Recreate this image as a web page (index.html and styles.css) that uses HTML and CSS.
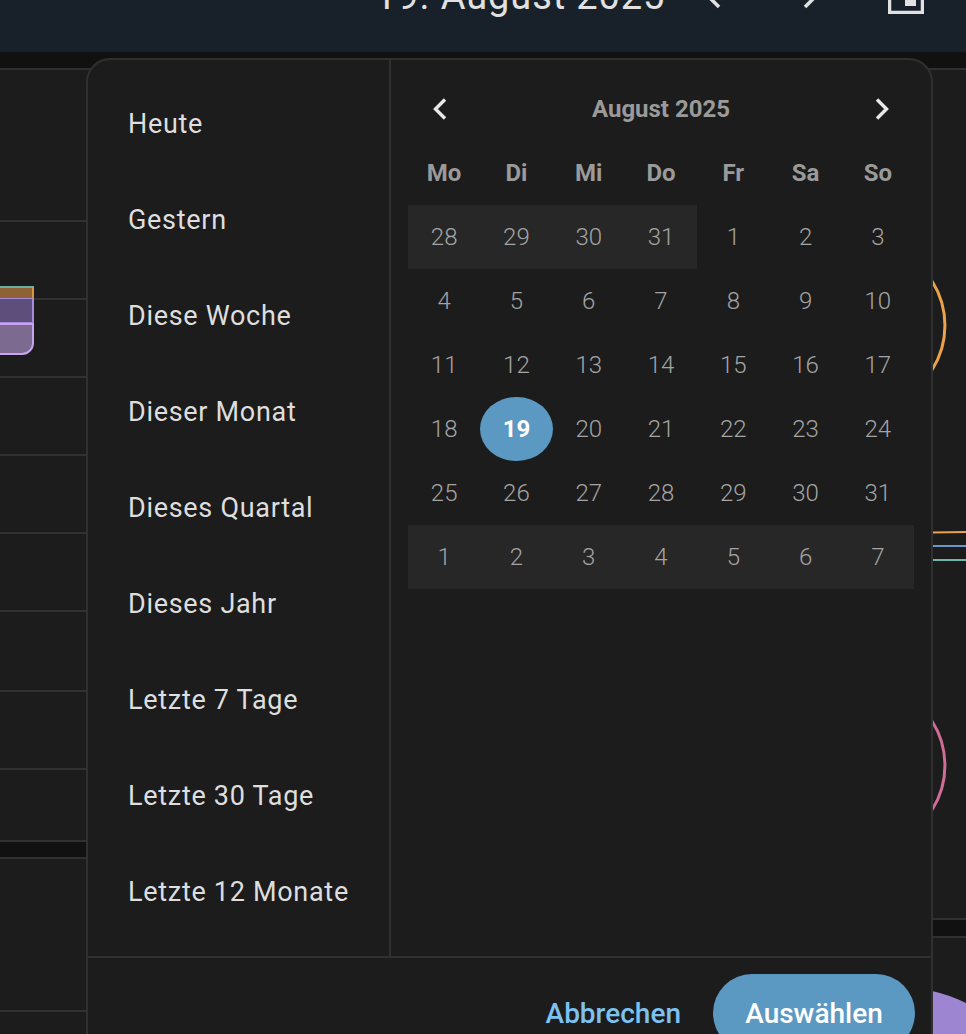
FILE: index.html
```html
<!DOCTYPE html>
<html lang="de">
<head>
  <meta charset="UTF-8" />
  <meta name="viewport" content="width=device-width, initial-scale=1.0" />
  <title>Verlauf</title>
  <link rel="stylesheet" href="styles.css">
</head>
<body>

  <header class="topbar">
    <span class="topbar-date">19. August 2025</span>
    <svg class="topbar-prev" width="14" height="10" viewBox="0 0 14 10"><path d="M12 7 3 -2" /></svg>
    <svg class="topbar-next" width="16" height="10" viewBox="0 0 16 10"><path d="M4 7l9-9" /></svg>
    <svg class="topbar-cal" width="36" height="14" viewBox="0 0 36 14"><path d="M1.5 0v12.5h33V0" /><rect class="fill" x="17" y="0" width="11" height="6" /></svg>
  </header>

  <main class="board">
    <div class="col col-left">
      <section class="card card-rows">
        <div class="row row-first"></div>
        <div class="row"></div>
        <div class="row"></div>
        <div class="row"></div>
        <div class="row"></div>
        <div class="row"></div>
        <div class="row row-tall"></div>
        <div class="row"></div>
        <div class="row row-last"></div>
        <div class="bar">
          <div class="bar-top"></div>
          <div class="bar-mid"></div>
          <div class="bar-low"></div>
        </div>
      </section>
      <section class="card card-second">
        <div class="row row-second"></div>
      </section>
    </div>

    <div class="col col-right">
      <section class="card card-chart">
        <svg class="chart" width="466" height="848" viewBox="0 0 466 848">
          <path class="arc-orange" d="M432 211A83 83 0 0 1 432 300" />
          <path class="line-orange" d="M432 462.500L466 462" />
          <path class="line-blue" d="M432 476h34" />
          <path class="line-teal" d="M432 490h34" />
          <path class="arc-pink" d="M432 651A83 83 0 0 1 432 740" />
        </svg>
      </section>
      <section class="card card-pie">
        <svg class="chart" width="466" height="96" viewBox="0 0 466 96">
          <path class="slice" d="M432 53q18 4 34 12v31h-34z" />
        </svg>
      </section>
    </div>
  </main>

  <div class="dialog">
    <div class="dialog-body">
      <ul class="presets">
        <li>Heute</li>
        <li>Gestern</li>
        <li>Diese Woche</li>
        <li>Dieser Monat</li>
        <li>Dieses Quartal</li>
        <li>Dieses Jahr</li>
        <li>Letzte 7 Tage</li>
        <li>Letzte 30 Tage</li>
        <li>Letzte 12 Monate</li>
      </ul>

      <div class="calendar">
        <div class="cal-head">
          <svg class="cal-arrow" width="16" height="24" viewBox="0 0 16 24"><path d="M13 2.500 3.500 12l9.500 9.500" /></svg>
          <span class="cal-title">August 2025</span>
          <svg class="cal-arrow" width="16" height="24" viewBox="0 0 16 24"><path d="M3 2.500l9.500 9.500L3 21.500" /></svg>
        </div>
        <div class="cal-grid">
          <div class="wd">Mo</div><div class="wd">Di</div><div class="wd">Mi</div><div class="wd">Do</div><div class="wd">Fr</div><div class="wd">Sa</div><div class="wd">So</div>

          <div class="day out">28</div><div class="day out">29</div><div class="day out">30</div><div class="day out">31</div><div class="day">1</div><div class="day">2</div><div class="day">3</div>
          <div class="day">4</div><div class="day">5</div><div class="day">6</div><div class="day">7</div><div class="day">8</div><div class="day">9</div><div class="day">10</div>
          <div class="day">11</div><div class="day">12</div><div class="day">13</div><div class="day">14</div><div class="day">15</div><div class="day">16</div><div class="day">17</div>
          <div class="day">18</div><div class="day selected">19</div><div class="day">20</div><div class="day">21</div><div class="day">22</div><div class="day">23</div><div class="day">24</div>
          <div class="day">25</div><div class="day">26</div><div class="day">27</div><div class="day">28</div><div class="day">29</div><div class="day">30</div><div class="day">31</div>
          <div class="day out">1</div><div class="day out">2</div><div class="day out">3</div><div class="day out">4</div><div class="day out">5</div><div class="day out">6</div><div class="day out">7</div>
        </div>
      </div>
    </div>

    <div class="dialog-foot">
      <button class="btn-text">Abbrechen</button>
      <button class="btn-fill">Auswählen</button>
    </div>
  </div>

</body>
</html>
```

FILE: styles.css
```css
:root {
  --line: #303030;
  --surface: #1c1c1c;
  --blue: #5b98c2;
  --font: Roboto, 'Noto Sans', sans-serif;
}

html,
body {
  height: 1034px;
  overflow: hidden;
}

body {
  margin: 0;
  position: relative;
  font-family: var(--font);
  background: #111111;
}

/* top bar, its content runs off the top of the picture */
.topbar {
  height: 52px;
  box-sizing: border-box;
  background: #18212a;
  color: #e1e1e1;
  display: flex;
  align-items: flex-start;
  padding-left: 375px;
  overflow: hidden;
}

.topbar-date {
  font-size: 38px;
  line-height: 38px;
  letter-spacing: 0.9px;
  white-space: nowrap;
  margin-top: -23px;
}

.topbar svg {
  fill: none;
  stroke: #e1e1e1;
  stroke-width: 3.500;
  flex: none;
}

.topbar-prev {
  margin-left: 42px;
}

.topbar-next {
  margin-left: 80px;
}

.topbar-cal {
  margin-left: 71px;
}

.topbar-cal .fill {
  fill: #e1e1e1;
  stroke: none;
}

/* page behind the dialog */
.board {
  display: grid;
  grid-template-columns: 500px 466px;
  margin-top: 16px;
}

.col {
  display: flex;
  flex-direction: column;
}

.card {
  background: var(--surface);
  border-top: 2px solid var(--line);
  border-bottom: 2px solid var(--line);
  position: relative;
}

.card-second {
  margin-top: 15px;
  height: 200px;
  border-bottom: none;
}

.row {
  height: 76px;
  border-bottom: 2px solid var(--line);
}

.row-first {
  height: 150px;
}

.row-tall {
  height: 78px;
}

.row-last {
  height: 70px;
  border-bottom: none;
}

.row-second {
  height: 151px;
}

.bar {
  position: absolute;
  left: -14px;
  top: 216px;
  width: 48px;
}

.bar-top {
  height: 10px;
  background: #8e6234;
  border: solid #d9953f;
  border-width: 0 2px;
  border-top: 2px solid #66b2a4;
}

.bar-mid {
  height: 23px;
  background: #5d4e7c;
  border: solid #a98bdc;
  border-width: 1px 2px;
}

.bar-low {
  height: 28px;
  background: #7c6a90;
  border: 2px solid #c6a4f0;
  border-radius: 0 0 12px 12px;
}

.card-chart {
  height: 848px;
}

.card-pie {
  margin-top: 16px;
  height: 96px;
  border-bottom: none;
}

.chart {
  display: block;
  fill: none;
  stroke-width: 2;
}

.arc-orange {
  stroke: #eba24a;
  stroke-width: 3;
}

.arc-pink {
  stroke: #d06c96;
  stroke-width: 3;
}

.line-orange {
  stroke: #eba24a;
}

.line-blue {
  stroke: #6a96cc;
}

.line-teal {
  stroke: #6fb5a8;
}

.slice {
  fill: #9d85d1;
  stroke: none;
}

/* date range dialog */
.dialog {
  position: absolute;
  left: 86px;
  top: 58px;
  width: 847px;
  height: 976px;
  box-sizing: border-box;
  background: var(--surface);
  border: 2px solid var(--line);
  border-bottom: none;
  border-radius: 24px 24px 0 0;
  overflow: hidden;
}

.dialog-body {
  display: flex;
  height: 896px;
  border-bottom: 2px solid var(--line);
}

.presets {
  list-style: none;
  margin: 0;
  padding: 16px 0;
  width: 303px;
  flex: none;
  box-sizing: border-box;
  border-right: 2px solid var(--line);
}

.presets li {
  height: 96px;
  line-height: 96px;
  padding-left: 40px;
  font-size: 27px;
  letter-spacing: 0.7px;
  color: #dedede;
  white-space: nowrap;
}

.calendar {
  flex: 1;
  padding: 17px 17px 0 17px;
}

.cal-head {
  height: 64px;
  display: flex;
  align-items: center;
  justify-content: space-between;
  padding: 0 24px;
}

.cal-arrow {
  fill: none;
  stroke: #e8e8e8;
  stroke-width: 3.400;
}

.cal-title {
  font-size: 24px;
  font-weight: 700;
  color: #9a9a9a;
}

.cal-grid {
  display: grid;
  grid-template-columns: repeat(7, 1fr);
  grid-auto-rows: 64px;
}

.wd,
.day {
  display: flex;
  align-items: center;
  justify-content: center;
}

.wd {
  font-size: 24px;
  font-weight: 700;
  color: #9a9a9a;
}

.day {
  font-size: 24px;
  font-weight: 300;
  color: #a4a4a4;
}

.out {
  background: #272727;
}

.selected {
  background: var(--blue);
  border-radius: 50%;
  color: #ffffff;
  font-weight: 700;
}

.dialog-foot {
  display: flex;
  justify-content: flex-end;
  align-items: flex-start;
  gap: 32px;
  padding: 16px 16px 0 0;
}

.dialog-foot button {
  font-family: var(--font);
  font-size: 28px;
  font-weight: 500;
  border: none;
  box-sizing: border-box;
  height: 78px;
  line-height: 76px;
  padding: 2px 0 0;
  background: none;
}

.btn-text {
  color: #7cc1f0;
}

.dialog-foot .btn-fill {
  width: 202px;
  background: var(--blue);
  color: #ffffff;
  border-radius: 39px;
}
```
